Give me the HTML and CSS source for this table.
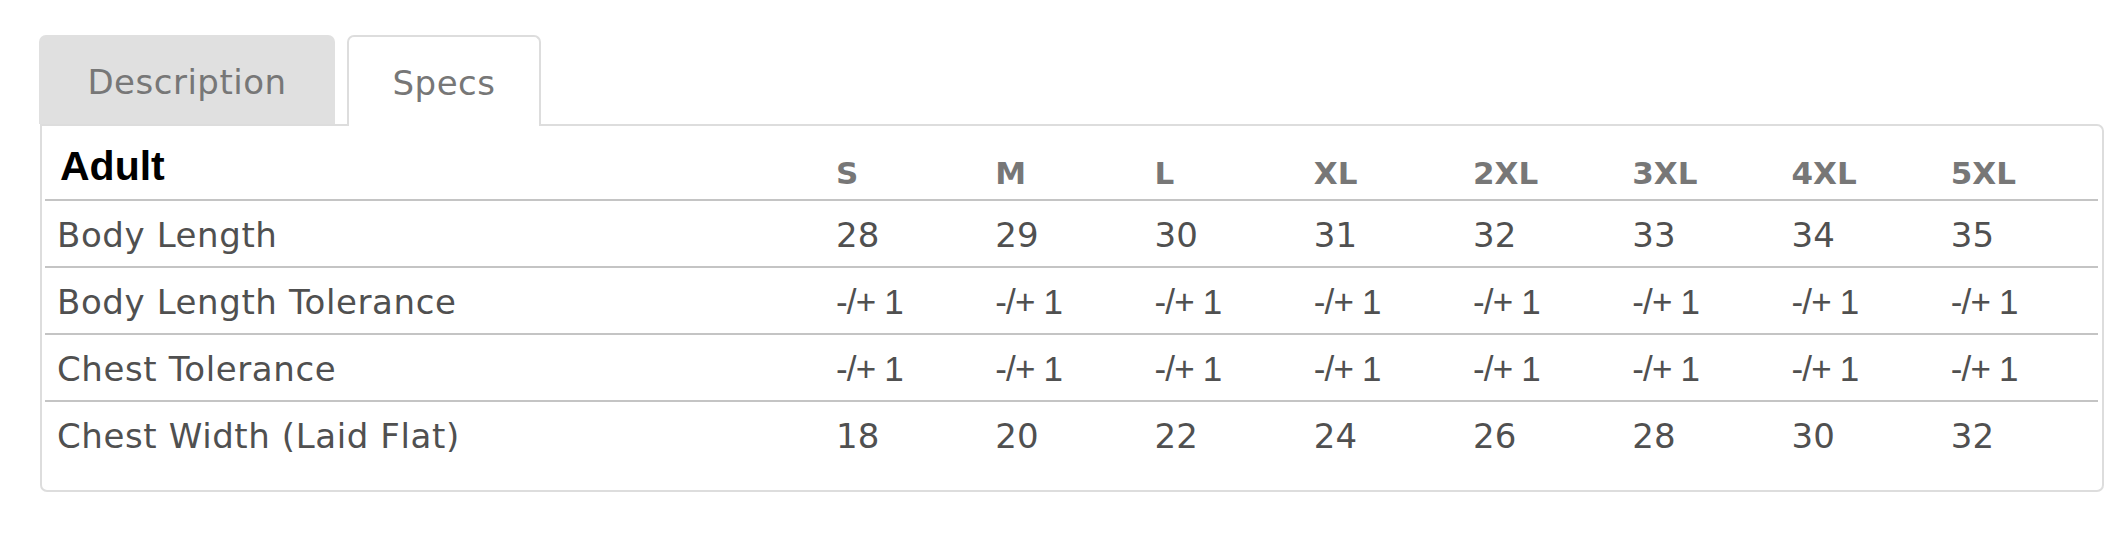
FILE: index.html
```html
<!DOCTYPE html>
<html lang="en">
<head>
<meta charset="utf-8">
<title>Specs</title>
<link rel="stylesheet" href="styles.css">
</head>
<body>
<div class="page">
  <div class="tabs">
    <div class="tab tab-inactive">Description</div>
    <div class="tab tab-active">Specs</div>
  </div>
  <div class="panel">
    <table class="specs">
      <colgroup>
        <col class="label-col">
        <col><col><col><col><col><col><col><col>
      </colgroup>
      <thead>
        <tr>
          <th class="group">Adult</th>
          <th>S</th><th>M</th><th>L</th><th>XL</th><th>2XL</th><th>3XL</th><th>4XL</th><th>5XL</th>
        </tr>
      </thead>
      <tbody>
        <tr>
          <td class="label">Body Length</td>
          <td>28</td><td>29</td><td>30</td><td>31</td><td>32</td><td>33</td><td>34</td><td>35</td>
        </tr>
        <tr>
          <td class="label">Body Length Tolerance</td>
          <td class="tol">-/+ 1</td><td class="tol">-/+ 1</td><td class="tol">-/+ 1</td><td class="tol">-/+ 1</td><td class="tol">-/+ 1</td><td class="tol">-/+ 1</td><td class="tol">-/+ 1</td><td class="tol">-/+ 1</td>
        </tr>
        <tr>
          <td class="label">Chest Tolerance</td>
          <td class="tol">-/+ 1</td><td class="tol">-/+ 1</td><td class="tol">-/+ 1</td><td class="tol">-/+ 1</td><td class="tol">-/+ 1</td><td class="tol">-/+ 1</td><td class="tol">-/+ 1</td><td class="tol">-/+ 1</td>
        </tr>
        <tr class="last">
          <td class="label">Chest Width (Laid Flat)</td>
          <td>18</td><td>20</td><td>22</td><td>24</td><td>26</td><td>28</td><td>30</td><td>32</td>
        </tr>
      </tbody>
    </table>
  </div>
</div>
</body>
</html>
```

FILE: styles.css
```css
* { box-sizing: border-box; }

html, body {
  margin: 0;
  background: #ffffff;
}

body {
  font-family: "DejaVu Sans", "Open Sans", sans-serif;
  color: #505050;
}

.page {
  padding: 35px 24px 0 40px;
}

.tabs {
  display: flex;
  gap: 12px;
  align-items: flex-start;
  margin-left: -1px;
}

.tab {
  height: 89px;
  display: flex;
  align-items: center;
  justify-content: center;
  padding-top: 4px;
  font-size: 34px;
  letter-spacing: 0.5px;
  color: #777777;
  border-radius: 7px 7px 0 0;
}

.tab-inactive {
  width: 296px;
  background: #e0e0e0;
}

.tab-active {
  width: 194px;
  height: 91px;
  padding-top: 2px;
  background: #ffffff;
  border: 2px solid #dddddd;
  border-bottom: none;
  position: relative;
  z-index: 1;
  margin-bottom: -2px;
}

.panel {
  border: 2px solid #dddddd;
  border-radius: 0 7px 7px 7px;
  padding: 0 4px 22px 3px;
}

.specs {
  width: 100%;
  border-collapse: collapse;
  table-layout: fixed;
}

.label-col {
  width: 779px;
}

.specs th,
.specs td {
  text-align: left;
  padding: 0 12px;
  white-space: nowrap;
}

.specs thead th {
  height: 74px;
  vertical-align: bottom;
  padding-bottom: 7px;
  font-size: 31px;
  font-weight: bold;
  color: #777777;
  border-bottom: 2px solid #c4c4c4;
  line-height: 1.2;
}

.specs thead th.group {
  vertical-align: top;
  padding: 16px 15px 0;
  font-family: "Liberation Sans", Arial, sans-serif;
  font-size: 41px;
  color: #000000;
}

.specs td {
  height: 67px;
  font-size: 34px;
  vertical-align: middle;
  padding-top: 2px;
  border-bottom: 2px solid #c4c4c4;
}

.specs td.label {
  letter-spacing: 0.6px;
}

.specs td.tol {
  font-family: "Liberation Sans", Arial, sans-serif;
  font-size: 35px;
  letter-spacing: -0.8px;
}

.specs tr.last td {
  border-bottom: none;
}
```
